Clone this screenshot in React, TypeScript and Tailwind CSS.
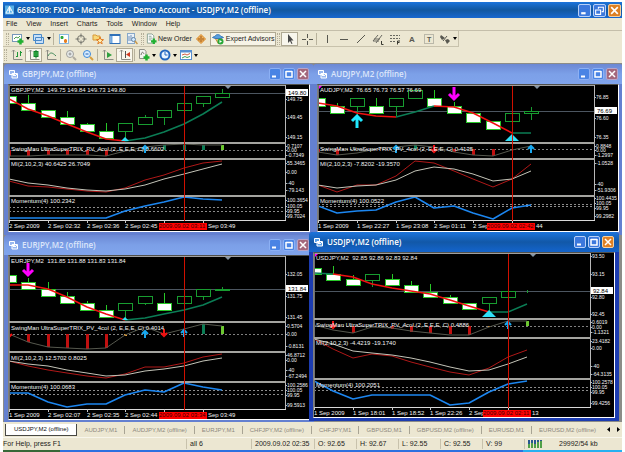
import React from 'react';

type Candle = {
  top: number;
  bottom: number;
  high?: number;
  low?: number;
  hollow?: boolean;
};
type Mark = {
  at: number;
  y: number;
  kind: 'up' | 'down';
  color: string;
  big?: boolean;
};
type Bar = {
  at: number;
  y: number;
  color: string;
};
type AxisLabel = [number, string];
interface ChartData {
  symbol: string;
  quote: string;
  swing: string;
  mi: string;
  momentum: string;
  height: number;
  splits: [number, number, number, number];
  textRows: [number, number, number, number, number];
  priceY: number;
  price: string;
  candles: Candle[];
  average: number[];
  // ranges of the moving average, drawn red for falling and green for rising
  trend: [number, number, string][];
  triangle: { at: number; y: number; size: number };
  corner?: boolean;
  marks: Mark[];
  bars: Bar[];
  zero: number;
  swingLine: number[];
  miRed: number[];
  miWhite: number[];
  momentumLine: number[];
  levels: [number, number];
  cursor: number;
  cursorTime: string;
  dates: string[];
  tail: string;
  axis: AxisLabel[];
}

const RED = '#f01010';
const GREEN = '#0b7d55';
const BLUE = '#1c86f0';
const MAGENTA = '#ff00ff';
const STEP = 19.4;
const PLOT = 276;
const px = (i: number) => Math.round(i * STEP);
const points = (ys: number[], from = 0) => ys.map((y, i) => `${px(i + from)},${y}`).join(' ');

const f = (top: number, bottom: number, high = top, low = bottom): Candle => ({ top, bottom, high, low });
const h = (top: number, bottom: number, high = top, low = bottom): Candle => ({ top, bottom, high, low, hollow: true });

const gbpjpy: ChartData = {
  symbol: 'GBPJPY,M2',
  quote: '149.75 149.84 149.73 149.80',
  swing: 'SwingMan UltraSuperTRIX_PV_4col (2, E,E,E, C) 0.6602',
  mi: 'MI(2,10,2,3) 40.6425 26.7049',
  momentum: 'Momentum(4) 100.2342',
  height: 146,
  splits: [57, 73, 110, 135],
  textRows: [5, 64, 79, 116, 141],
  priceY: 8,
  price: '149.80',
  candles: [f(11, 18), f(18, 25, 10), f(25, 32), f(32, 39, 26), f(39, 46, 38), f(46, 53, 38), h(38, 46, 38, 54), h(32, 39, 30), h(25, 32, 25, 40), h(18, 25), h(11, 18, 11, 22), h(8, 12, 4, 13)],
  average: [14, 24, 31, 39, 47, 54, 56, 53, 47, 39, 29, 17],
  trend: [[0, 6, RED], [6, 11, GREEN]],
  triangle: { at: 6, y: 52, size: 4 },
  marks: [{ at: 7, y: 61, kind: 'up', color: '#18a8f0' }],
  bars: [{ at: 0, y: 71, color: '#c01010' }, { at: 1, y: 71, color: '#c01010' }, { at: 2, y: 70, color: '#c01010' }, { at: 3, y: 70, color: '#c01010' }, { at: 4, y: 70, color: '#c01010' }, { at: 5, y: 71, color: '#c01010' }, { at: 8, y: 60, color: '#0b7d55' }, { at: 9, y: 60, color: '#0b7d55' }, { at: 10, y: 60, color: '#0b7d55' }, { at: 11, y: 60, color: '#6cc830' }],
  zero: 65,
  swingLine: [71, 71, 70, 70, 70, 71, 66, 62, 60, 59, 60, 60],
  miRed: [96, 101, 102, 104, 106, 107, 103, 95, 90, 83, 78, 76],
  miWhite: [94, 98, 100, 103, 105, 106, 104, 100, 94, 89, 84, 79],
  momentumLine: [133, 133, 133, 133, 133, 133, 126, 121, 117, 112, 114, 115],
  levels: [122, 126],
  cursor: 9,
  cursorTime: '2009.09.02 03:11',
  dates: ['2 Sep 2009', '2 Sep 02:32', '2 Sep 02:36', '2 Sep 02:45'],
  tail: 'Sep 03:49',
  axis: [[14, '149.75'], [32, '149.45'], [52, '149.15'], [61, '0.7107'], [65, '0.00'], [70, '-0.7349'], [78, '55.3465'], [87, '0.00'], [98, '-40'], [105, '-79.143'], [115, '100.3654'], [121, '100.05'], [126, '99.95'], [131, '99.7024']]
};

const audjpy: ChartData = {
  symbol: 'AUDJPY,M2',
  quote: '76.65 76.73 76.57 76.69',
  swing: 'SwingMan UltraSuperTRIX_PV_4col (2, E,E,E, C) 0.4135',
  mi: 'MI(2,10,2,3) -7.8202 -19.3570',
  momentum: 'Momentum(4) 100.0522',
  height: 146,
  splits: [57, 73, 110, 135],
  textRows: [5, 64, 79, 116, 141],
  priceY: 26,
  price: '76.69',
  candles: [f(13, 21, 2), f(21, 28, 18), h(13, 21, 13, 30), f(21, 28, 13), h(13, 21, 13, 31), h(5, 13), f(13, 21, 5), f(21, 28, 17), f(28, 37), f(36, 44), h(28, 36), h(26, 28, 22, 35)],
  average: [18, 21, 28, 31, 32, 27, 21, 22, 28, 38, 48, 48],
  trend: [[0, 4, RED], [4, 6, GREEN], [6, 10, RED], [10, 11, GREEN]],
  triangle: { at: 10, y: 49, size: 7 },
  corner: true,
  marks: [{ at: 2, y: 31, kind: 'up', color: '#20e8ff', big: true }, { at: 7, y: 2, kind: 'down', color: MAGENTA, big: true }, { at: 4, y: 61, kind: 'up', color: '#18a8f0' }, { at: 6, y: 60, kind: 'down', color: RED }, { at: 11, y: 61, kind: 'up', color: '#18a8f0' }],
  bars: [{ at: 0, y: 67, color: '#c01010' }, { at: 1, y: 70, color: '#c01010' }, { at: 5, y: 60, color: '#0b7d55' }, { at: 7, y: 67, color: '#c01010' }, { at: 8, y: 70, color: '#c01010' }, { at: 9, y: 71, color: '#c01010' }],
  zero: 64,
  swingLine: [67, 70, 68, 64, 62, 60, 62, 67, 70, 71, 65, 61],
  miRed: [100, 107, 100, 100, 91, 76, 78, 86, 94, 102, 94, 79],
  miWhite: [100, 103, 101, 100, 95, 86, 82, 84, 89, 96, 94, 86],
  momentumLine: [121, 128, 126, 125, 117, 112, 123, 121, 128, 134, 123, 120],
  levels: [119, 121],
  cursor: 10,
  cursorTime: '2009.09.02 02:42',
  dates: ['1 Sep 2009', '1 Sep 22:27', '1 Sep 23:08', '2 Sep 01:11', '2 Sep'],
  tail: '44',
  axis: [[12, '76.85'], [33, '76.60'], [52, '76.35'], [61, '0.8848'], [65, '0.00'], [70, '-1.2997'], [78, '-1.0528'], [99, '-40'], [105, '-51.9306'], [113, '100.4435'], [118, '100.05'], [123, '99.95'], [131, '99.2982']]
};

const eurjpy: ChartData = {
  symbol: 'EURJPY,M2',
  quote: '131.85 131.88 131.83 131.84',
  swing: 'SwingMan UltraSuperTRIX_PV_4col (2, E,E,E, C) 0.4014',
  mi: 'MI(2,10,2,3) 12.5702 0.8025',
  momentum: 'Momentum(4) 100.0683',
  height: 163,
  splits: [65, 95, 125, 153],
  textRows: [5, 72, 102, 131, 159],
  priceY: 33,
  price: '131.84',
  candles: [f(19, 26, 6), f(26, 33, 22), f(33, 40, 26), f(40, 47, 36), f(47, 54, 45), f(54, 61, 49), h(47, 54, 47, 63), h(40, 47, 40, 49), f(47, 54, 37), h(40, 47), h(33, 40, 33, 44), h(33, 34, 31, 35)],
  average: [29, 29, 33, 41, 51, 58, 64, 62, 58, 54, 49, 41],
  trend: [[0, 6, RED], [6, 11, GREEN]],
  triangle: { at: 6, y: 61, size: 3 },
  marks: [{ at: 1, y: 7, kind: 'down', color: MAGENTA, big: true }, { at: 0, y: 74, kind: 'down', color: RED }, { at: 7, y: 75, kind: 'up', color: '#18a8f0' }, { at: 8, y: 73, kind: 'down', color: RED }, { at: 9, y: 74, kind: 'up', color: '#18a8f0' }],
  bars: [{ at: 1, y: 86, color: '#c01010' }, { at: 2, y: 91, color: '#c01010' }, { at: 3, y: 92, color: '#c01010' }, { at: 4, y: 93, color: '#c01010' }, { at: 5, y: 92, color: '#c01010' }, { at: 6, y: 80, color: '#f0a030' }, { at: 10, y: 68, color: '#0b7d55' }, { at: 11, y: 70, color: '#6cc830' }],
  zero: 78,
  swingLine: [78, 86, 91, 92, 93, 92, 79, 71, 78, 73, 68, 70],
  miRed: [105, 110, 114, 117, 120, 122, 118, 111, 111, 107, 101, 98],
  miWhite: [105, 108, 110, 114, 117, 120, 119, 115, 113, 110, 105, 102],
  momentumLine: [137, 137, 146, 151, 148, 148, 139, 134, 136, 127, 131, 134],
  levels: [134, 138],
  cursor: 9,
  cursorTime: '2009.09.02 03:34',
  dates: ['1 Sep 2009', '2 Sep 02:07', '2 Sep 02:35', '2 Sep 02:44'],
  tail: 'Sep 03:49',
  axis: [[18, '132.05'], [40, '131.75'], [61, '131.45'], [70, '0.5704'], [78, '0.00'], [90, '-0.8131'], [99, '46.8712'], [104, '0.00'], [114, '-40'], [120, '-67.2494'], [129, '100.2586'], [134, '100.05'], [139, '99.95'], [149, '99.5913']]
};

const usdjpy: ChartData = {
  symbol: 'USDJPY,M2',
  quote: '92.85 92.86 92.83 92.84',
  swing: 'SwingMan UltraSuperTRIX_PV_4col (2, E,E,E, C) 0.4886',
  mi: 'MI(2,10,2,3) -4.4219 -19.1740',
  momentum: 'Momentum(4) 100.2051',
  height: 164,
  splits: [65, 84, 125, 154],
  textRows: [5, 72, 90, 132, 160],
  priceY: 38,
  price: '92.84',
  candles: [f(15, 21, 4), f(21, 27, 13), f(26, 32, 22), h(21, 27, 21, 34), f(26, 32, 21), f(32, 39, 28), f(39, 44, 31), f(44, 50, 42), f(50, 56), h(44, 50, 44, 59), h(38, 44), h(38, 38, 37, 40)],
  average: [20, 21, 24, 31, 35, 38, 41, 47, 53, 59, 59, 51],
  trend: [[0, 1, GREEN], [1, 9, RED], [9, 11, GREEN]],
  triangle: { at: 9, y: 57, size: 7 },
  corner: true,
  marks: [{ at: 1, y: 68, kind: 'down', color: RED }, { at: 10, y: 69, kind: 'up', color: '#18a8f0' }],
  bars: [{ at: 2, y: 80, color: '#c01010' }, { at: 4, y: 76, color: '#c01010' }, { at: 5, y: 79, color: '#c01010' }, { at: 6, y: 80, color: '#c01010' }, { at: 7, y: 81, color: '#c01010' }, { at: 8, y: 82, color: '#c01010' }, { at: 9, y: 74, color: '#f0a030' }, { at: 11, y: 68, color: '#6cc830' }],
  zero: 73,
  swingLine: [72, 77, 80, 74, 75, 78, 80, 82, 82, 74, 68, 68],
  miRed: [86, 96, 105, 101, 103, 109, 114, 119, 122, 115, 104, 97],
  miWhite: [86, 91, 98, 100, 102, 105, 109, 114, 118, 117, 111, 104],
  momentumLine: [128, 138, 146, 142, 142, 142, 142, 152, 150, 139, 131, 128],
  levels: [134, 137],
  cursor: 10,
  cursorTime: '2009.09.02 02:11',
  dates: ['1 Sep 2009', '1 Sep 18:01', '1 Sep 18:52', '1 Sep 22:26', '2 Sep'],
  tail: '13',
  axis: [[3, '93.50'], [21, '93.15'], [44, '92.80'], [61, '92.45'], [69, '0.6019'], [74, '0.00'], [79, '-1.1321'], [88, '23.4182'], [95, '0.00'], [113, '-40'], [121, '-64.3135'], [129, '100.2578'], [134, '100.05'], [139, '99.95'], [150, '99.4256']]
};

function Arrow({ mark }: { mark: Mark }) {
  const x = px(mark.at);
  const [w, len, stroke] = mark.big ? [5, 12, 3] : [3, 7, 2];
  const tip = mark.kind === 'up' ? mark.y : mark.y + len;
  const end = mark.kind === 'up' ? mark.y + len : mark.y;
  const wing = mark.kind === 'up' ? tip + w : tip - w;
  return <path d={`M${x} ${end}V${tip}M${x - w} ${wing}L${x} ${tip}L${x + w} ${wing}`} fill="none" stroke={mark.color} strokeWidth={stroke} />;
}

function Chart({ data }: { data: ChartData }) {
  const [head, swingRow, miRow, momentumRow, dateRow] = data.textRows;
  const [s1, s2, s3, foot] = data.splits;
  const cursorX = px(data.cursor);
  return <svg viewBox={`0 0 300 ${data.height}`} className="block w-full bg-black font-['Liberation_Sans',sans-serif] text-[6px]">
      <g shapeRendering="crispEdges">
        <path d={`M0 ${data.priceY + 0.5}H${PLOT}`} stroke="#4c5660" />
        <path d={`M0 ${data.zero + 0.5}H${PLOT}`} stroke="#808080" strokeDasharray="2 2" />
        {data.levels.map(y => <path key={y} d={`M0 ${y + 0.5}H${PLOT}`} stroke="#8c8c8c" strokeDasharray="2 2" />)}
        {data.candles.map((c, i) => <g key={i} stroke={c.hollow ? '#189c30' : '#28c828'} fill={c.hollow ? '#000' : '#fff'}>
            <path d={`M${px(i) + 0.5} ${c.high}V${c.low}`} />
            <rect x={px(i) - 7 + 0.5} y={c.top + 0.5} width={14} height={c.bottom - c.top} />
          </g>)}
        {data.bars.map(b => <rect key={b.at} x={px(b.at) - 1} width={3} y={Math.min(b.y, data.zero)} height={Math.abs(b.y - data.zero)} fill={b.color} />)}
      </g>
      <g fill="none" strokeLinejoin="round">
        <polyline points={points(data.swingLine)} stroke="#56584e" />
        <polyline points={points(data.miRed)} stroke="#b01818" />
        <polyline points={points(data.miWhite)} stroke="#c4c4b8" />
        <polyline points={points(data.momentumLine)} stroke={BLUE} strokeWidth={1.5} />
        {data.trend.map(([from, to, color]) => <polyline key={from} points={points(data.average.slice(from, to + 1), from)} stroke={color} strokeWidth={1.5} />)}
      </g>
      <path d={`M${px(data.triangle.at)} ${data.triangle.y}l${data.triangle.size} ${data.triangle.size}h${-2 * data.triangle.size}z`} fill="#30e0f8" />
      {data.marks.map(m => <Arrow key={`${m.at}-${m.y}`} mark={m} />)}
      {data.corner && <path d="M0 0h5l-5 5z" fill={MAGENTA} />}
      <path d="M216 1h6l-3 3z" fill="#8494a4" />
      <g shapeRendering="crispEdges">
        <rect x="0" y="0" width={PLOT} height="1" fill="#a0a0a0" />
        <rect x={PLOT} y="0" width="1" height={foot + 1} fill="#b8b8b8" />
        <rect x="0" y="0" width="1" height={foot} fill="#707070" />
        {[s1, s2, s3].map(y => <rect key={y} x="0" y={y} width={PLOT + 1} height="2" fill="#a4a4a0" />)}
        <rect x="0" y={foot} width={PLOT + 1} height="1" fill="#d8d8d8" />
        {[0, 2, 4, 6, 8, 10].map(i => <rect key={i} x={px(i)} y={foot} width="1" height="3" fill="#c8c8c8" />)}
        <rect x={cursorX} y="1" width="1" height={foot} fill="#d01000" />
        {data.axis.map(([y]) => <rect key={y} x={PLOT} y={y} width="2" height="1" fill="#b8b8b8" />)}
      </g>
      <g fill="#f4f4f4">
        <text x="2" y={head + 2} xmlSpace="preserve">{`${data.symbol}  ${data.quote}`}</text>
        <text x="2" y={swingRow + 2}>{data.swing}</text>
        <text x="2" y={miRow + 2}>{data.mi}</text>
        <text x="2" y={momentumRow + 2}>{data.momentum}</text>
        {data.axis.map(([y, label]) => <text key={label + y} x="278" y={y + 2} className="text-[5px]">{label}</text>)}
        {data.dates.map((d, i) => <text key={d} x={px(i * 2)} y={dateRow + 2}>{d}</text>)}
        <text x={cursorX + 24} y={dateRow + 2}>{data.tail}</text>
      </g>
      <rect x={cursorX - 25} y={dateRow - 3} width="48" height="7" fill="#ff0000" />
      <text x={cursorX - 25} y={dateRow + 2} fill="#400000">{data.cursorTime}</text>
      <rect x={PLOT + 1} y={data.priceY - 4} width="22" height="7" fill="#fff" />
      <text x="279" y={data.priceY + 2} fill="#000">{data.price}</text>
    </svg>;
}

function WindowButtons({ active, main }: { active?: boolean; main?: boolean }) {
  const size = main ? 'w-[13px] h-[13px]' : 'w-[12px] h-[12px]';
  const blue = active ? 'bg-[#3c78dc] border-[#b8d0f8]' : 'bg-[#4a84e4] border-[#8cb0f4]';
  const close = active ? 'bg-[#dd8024] border-[#f4d0a0]' : 'bg-[#a4687c] border-[#b8a4c8]';
  return <div className="flex gap-[2px]">
      <button aria-label="Minimize" className={`${size} ${blue} border rounded-[2px]`}>
        <svg viewBox="0 0 10 10" className="w-full h-full"><path d="M2 7.500h4" stroke="#fff" strokeWidth="2" /></svg>
      </button>
      <button aria-label={main ? 'Restore' : 'Maximize'} className={`${size} ${blue} border rounded-[2px]`}>
        <svg viewBox="0 0 10 10" className="w-full h-full">
          {main ? <path d="M4 3.500V2h4.500v4H7M1.500 4.500h4.500v4h-4.500z" fill="none" stroke="#fff" /> : <path d="M2 2.500h6M2 2v6h6v-6" fill="none" stroke="#fff" strokeWidth="1.500" />}
        </svg>
      </button>
      <button aria-label="Close" className={`${size} ${close} border rounded-[2px]`}>
        <svg viewBox="0 0 10 10" className="w-full h-full"><path d="M2 2l6 6M8 2l-6 6" stroke="#fff" strokeWidth="1.500" /></svg>
      </button>
    </div>;
}

function ChartWindow({ data, active, place }: { data: ChartData; active?: boolean; place: string }) {
  return <section className={`absolute w-[310px] px-[4px] pb-[3px] rounded-t-[4px] ${active ? 'bg-[#1c3cb0] z-10' : 'bg-[#6480d0]'} ${place}`}>
      <header className={`-mx-[4px] px-[5px] h-[20px] flex items-center justify-between rounded-t-[4px] ${active ? 'bg-linear-to-b from-[#1c74dc] via-[#1258a8] to-[#1464cc]' : 'bg-linear-to-b from-[#6c88d4] via-[#7ca0e8] to-[#80a4ec]'}`}>
        <div className="flex items-center gap-[4px]">
          <svg viewBox="0 0 9 9" className="w-[9px] h-[9px]">
            <path d="M0.500 0.500h5v4h-5zM3 3.500h5.500v4.500h-5.500z" fill={active ? '#5aa0e8' : '#98b8f0'} stroke="#fff" />
            <path d="M4 6l1-1 1 1 2-2" fill="none" stroke="#fff" />
          </svg>
          <h2 className={`font-['Open_Sans',sans-serif] font-semibold text-[8px] leading-[12px] ${active ? 'text-white' : 'text-[#dce6fa]'}`}>{data.symbol} (offline)</h2>
        </div>
        <WindowButtons active={active} />
      </header>
      <div className="border border-t-[#50504c] border-l-[#80807c] border-r-white border-b-white">
        <Chart data={data} />
      </div>
    </section>;
}

function Grip() {
  return <div className="w-[3px] h-[12px] mx-px border-x border-dotted border-[#b4ae98]" />;
}
function Separator() {
  return <div className="w-px h-[12px] mx-px bg-[#b8b29c]" />;
}
interface ToolProps {
  label: string;
  children: React.ReactNode;
  pressed?: boolean;
  menu?: boolean;
}
function Tool({ label, children, pressed, menu }: ToolProps) {
  return <button aria-label={label} aria-pressed={pressed} className={`h-[14px] flex items-center justify-center gap-[2px] ${menu ? 'w-[21px]' : 'w-[17px]'} ${pressed ? 'bg-[#f8f6ec] border border-[#b0aa94]' : ''}`}>
      <svg viewBox="0 0 12 12" className="w-[12px] h-[12px] shrink-0" fill="none">{children}</svg>
      {menu && <svg viewBox="0 0 4 3" className="w-[4px] h-[3px] shrink-0"><path d="M0 0h4l-2 3z" fill="#000" /></svg>}
    </button>;
}

const plus = <path d="M8.500 5.500v6M5.500 8.500h6" stroke="#20b030" strokeWidth="2.500" />;
const axes = <path d="M2.500 1v9.500h9M1 2.500l1.500-1.500 1.500 1.500" stroke="#8c8c84" />;

function MainToolbar() {
  return <div className="h-[16px] flex">
      <div className="flex items-center pl-[2px] border-r border-b border-[#c8c2ac]">
        <Grip />
        <Tool label="New chart" menu>
          <rect x="0.500" y="1.500" width="9" height="7" fill="#fff" stroke="#7898b8" /><path d="M2 6l2-2 2 1 2-2" stroke="#50a050" />{plus}
        </Tool>
        <Tool label="Profiles" menu>
          <path d="M0.500 1.500h8v6h-8zM2.500 4.500h8v6h-8z" fill="#c8e0f8" stroke="#4888c8" />
        </Tool>
        <Separator />
        <Tool label="Market Watch">
          <rect x="1.500" y="1.500" width="9" height="9" fill="#fff" stroke="#88b8e0" /><path d="M4 3v3M2.500 4.500h3" stroke="#30a840" strokeWidth="2" /><path d="M7.500 6v4M6 8h3" stroke="#e88020" strokeWidth="2" />
        </Tool>
        <Tool label="Data window">
          <circle cx="6" cy="6" r="3.500" stroke="#74746c" /><path d="M6 0.500v4M6 7.500v4M0.500 6h4M7.500 6h4" stroke="#74746c" />
        </Tool>
        <Tool label="Navigator">
          <path d="M1 2h3l1 1h3v4h-7z" fill="#f8d878" stroke="#d89838" /><path d="M8 4l1 2.500 2.500.2-2 1.600.700 2.500-2.200-1.400-2.200 1.400.700-2.500-2-1.600 2.500-.2z" fill="#fff0b0" stroke="#e07820" />
        </Tool>
        <Tool label="Terminal">
          <rect x="1" y="1.500" width="10" height="9" fill="#fff" stroke="#3070b8" /><path d="M2.500 2v8" stroke="#70a8e0" strokeWidth="2" /><path d="M1 2.500h10" stroke="#3070b8" />
        </Tool>
        <Tool label="Strategy Tester">
          <rect x="1.500" y="0.500" width="7" height="10" fill="#e8f0f8" stroke="#88a8c8" /><path d="M3 3v5M5 2v6M7 4v3" stroke="#7090b8" /><circle cx="7.500" cy="6.500" r="2" fill="#d0e8ff" stroke="#6888a8" /><path d="M9 8l2.500 3" stroke="#c89848" strokeWidth="1.500" />
        </Tool>
        <Grip />
        <button className="h-[14px] flex items-center gap-px px-px whitespace-nowrap">
          <svg viewBox="0 0 12 12" className="w-[11px] h-[12px]" fill="none">
            <path d="M1.500 0.500h5l2 2v8h-7z" fill="#fff" stroke="#88a090" /><path d="M3 3h3M3 5h4M3 7h3" stroke="#88a090" />{plus}
          </svg>
          New Order
        </button>
        <Tool label="MetaEditor">
          <path d="M6 1.500l4.500 4.500-4.500 4.500-4.500-4.500z" fill="#f4b860" stroke="#d88828" /><path d="M6 3v6M4 5v2.500M8 5v2.500" stroke="#985010" />
        </Tool>
        <button aria-pressed className="h-[14px] flex items-center gap-[2px] px-px bg-[#f6f3e6] border border-[#b0aa94] whitespace-nowrap">
          <svg viewBox="0 0 12 12" className="w-[12px] h-[12px]" fill="none">
            <path d="M3 5l3.500 6 3-6z" fill="#f0c080" stroke="#c89040" /><path d="M0.500 4.500c1-1 2-1 2.500-1 .5-2.500 5-2.500 6 0 1 0 2 .5 2.500 1-3 1.500-8 1.500-11 0z" fill="#58a0e0" stroke="#3878b8" /><circle cx="8.500" cy="8.500" r="3" fill="#28a838" /><path d="M7.500 7l2.500 1.500-2.500 1.500z" fill="#fff" />
          </svg>
          Expert Advisors
        </button>
        <Grip />
        <Tool label="Cursor" pressed>
          <path d="M4 1v9l2-2 1.500 3 1-.5-1.500-3h2.500z" fill="#484848" />
        </Tool>
        <Tool label="Crosshair">
          <path d="M6.500 1v4M6.500 8v4M1 6.500h4M8 6.500h4" stroke="#585850" />
        </Tool>
        <Separator />
        <Tool label="Vertical line"><path d="M6.500 2v8" stroke="#585850" /></Tool>
        <Tool label="Horizontal line"><path d="M2 6.500h8" stroke="#585850" /></Tool>
        <Tool label="Trendline"><path d="M2 10l8-8" stroke="#585850" /></Tool>
        <Tool label="Equidistant channel">
          <path d="M1 8l5-6M4 10l6-8M2 6h6M1 8h6" stroke="#686860" /><path d="M9.500 8v3.500h2" stroke="#383830" />
        </Tool>
        <Tool label="Fibonacci retracement">
          <path d="M1 2.500h10M1 5.500h10M1 8.500h6" stroke="#686860" strokeDasharray="2 1" /><path d="M8.500 11.500v-3.500h2.500M8.500 9.500h2" stroke="#383830" />
        </Tool>
        <Tool label="Text"><text x="3" y="9" fontSize="8" fontWeight="bold" fill="#585850">A</text></Tool>
        <Tool label="Text label">
          <rect x="1.500" y="1.500" width="9" height="9" stroke="#888880" strokeDasharray="1 1" /><text x="4" y="9" fontSize="7" fontWeight="bold" fill="#585850">T</text>
        </Tool>
        <Tool label="Arrows" menu>
          <path d="M2 2l4 3-3 2-2-3zM6 7l3-1 2 2-3 3z" fill="#585850" /><path d="M4 8l4-5" stroke="#585850" />
        </Tool>
      </div>
    </div>;
}

function ChartToolbar() {
  return <div className="h-[16px] flex items-center">
      <Grip />
      <Tool label="Bar chart">{axes}<path d="M6.500 3v5M5 7.500h1.500M9.500 2v5M9.500 3.500h1.500" stroke="#209838" /></Tool>
      <Tool label="Candlesticks" pressed>{axes}<rect x="6" y="2.500" width="4" height="5" fill="#40c050" stroke="#108028" /><path d="M8 1v8.500" stroke="#108028" /></Tool>
      <Tool label="Line chart">{axes}<path d="M3 7c2-4 4-4 8 0" stroke="#408858" /></Tool>
      <Separator />
      <Tool label="Zoom in"><circle cx="5" cy="5" r="3.500" fill="#e8ecec" stroke="#a0a09c" /><path d="M3.500 5h3M5 3.500v3" stroke="#909090" /><path d="M8 8l3 3" stroke="#b0aca0" strokeWidth="2" /></Tool>
      <Tool label="Zoom out"><circle cx="5" cy="5" r="3.500" fill="#d8ecff" stroke="#3c88d8" /><path d="M3.500 5h3" stroke="#2060b0" /><path d="M8 8l3 3" stroke="#d8a040" strokeWidth="2" /></Tool>
      <Separator />
      <Tool label="Auto scroll">{axes}<path d="M5 3l5 3-5 3z" fill="#30a040" /></Tool>
      <Tool label="Chart shift" pressed>{axes}<path d="M6.500 2v7" stroke="#505050" /><path d="M11 3v5l-4-2.500z" fill="#d03820" /></Tool>
      <Separator />
      <Tool label="Indicators" menu><path d="M1.500 0.500h5l1.500 2v7h-6.500z" fill="#f4f4f0" stroke="#909088" /><path d="M3 6c1-4 2-3 3-1" stroke="#707068" />{plus}</Tool>
      <Tool label="Periods" menu><circle cx="6" cy="6" r="4.500" fill="#e8f4ff" stroke="#2468c0" strokeWidth="2" /><path d="M6 3v3h2.500" stroke="#2468c0" /></Tool>
      <Tool label="Templates" menu><rect x="0.500" y="1.500" width="11" height="9" fill="#fff" stroke="#5890d0" /><path d="M0.500 2.500h11" stroke="#5890d0" strokeWidth="2" /><path d="M2 6l3-1 2 1 3-1.500" stroke="#d06040" /><path d="M2 9l3-1.500 2 1 3-1" stroke="#40a050" /></Tool>
    </div>;
}

const menus = ['File', 'View', 'Insert', 'Charts', 'Tools', 'Window', 'Help'];
const tabs = ['AUDJPY,M1', 'AUDJPY,M2 (offline)', 'EURJPY,M1', 'CHFJPY,M2 (offline)', 'CHFJPY,M1', 'GBPUSD,M1', 'GBPUSD,M2 (offline)', 'EURUSD,M1', 'EURUSD,M2 (offline)'];
const prices = ['O: 92.65', 'H: 92.67', 'L: 92.55', 'C: 92.55', 'V: 99'];

export default function App() {
  return <div className="h-screen flex flex-col overflow-hidden bg-white pl-[3px] pr-[3px] pt-[2px] font-['Liberation_Sans',sans-serif] text-[7px] leading-[10px] text-[#1c1c1a]">
      <header className="h-[16px] shrink-0 flex items-center justify-between pl-[2px] pr-px bg-linear-to-b from-[#1c74dc] via-[#1258a0] to-[#1868d0]">
        <div className="flex items-center gap-[3px]">
          <svg viewBox="0 0 10 10" className="w-[9px] h-[10px]">
            <rect width="10" height="10" fill="#58b0e8" /><path d="M5 1l4 7.500h-8zM3 5h4M5 1v7" fill="none" stroke="#fff" />
          </svg>
          <h1 className="font-['Open_Sans',sans-serif] font-semibold text-[8px] leading-[12px] text-white">6682109: FXDD - MetaTrader - Demo Account - USDJPY,M2 (offline)</h1>
        </div>
        <WindowButtons active main />
      </header>
      <div className="shrink-0 bg-[#ece7d2]">
        <nav className="h-[13px] flex items-center gap-[9px] pl-[3px] border-b border-[#c4beaa]">
          {menus.map(menu => <button key={menu}>{menu}</button>)}
        </nav>
        <MainToolbar />
        <ChartToolbar />
      </div>
      <main className="relative flex-1 min-h-0 overflow-hidden bg-[#8c8c88]">
        <ChartWindow data={gbpjpy} place="left-[1px] top-[1px]" />
        <ChartWindow data={audjpy} place="left-[310px] top-[1px]" />
        <ChartWindow data={eurjpy} place="left-[1px] top-[172px]" />
        <ChartWindow data={usdjpy} active place="left-[306px] top-[169px]" />
      </main>
      <div className="h-[15px] shrink-0 flex items-center bg-[#ece7d2] pl-[2px] text-[6px] text-[#8c887e] whitespace-nowrap">
        <button className="h-[12px] px-[8px] bg-white border border-t-0 border-[#484844] text-[#101010]">USDJPY,M2 (offline)</button>
        <div className="flex-1 min-w-0 flex divide-x divide-[#a8a494]">
          {tabs.map(tab => <button key={tab} className="px-[7px] leading-[8px]">{tab}</button>)}
        </div>
        <div className="flex gap-[7px] pr-[2px]">
          <button aria-label="Scroll tabs left"><svg viewBox="0 0 3 5" className="w-[3px] h-[5px]"><path d="M3 0v5l-3-2.500z" fill="#000" /></svg></button>
          <button aria-label="Scroll tabs right"><svg viewBox="0 0 3 5" className="w-[3px] h-[5px]"><path d="M0 0v5l3-2.500z" fill="#000" /></svg></button>
        </div>
      </div>
      <footer className="h-[13px] shrink-0 flex items-center bg-[#ece7d2] border-t border-[#f8f6ec] whitespace-nowrap">
        <span className="flex-1">For Help, press F1</span>
        <span className="w-[65px] pl-[3px] border-l border-[#c8c2ac]">all 6</span>
        <span className="w-[63px] pl-[3px] border-l border-[#c8c2ac]">2009.09.02 02:35</span>
        {prices.map(price => <span key={price} className="w-[42px] pl-[3px] border-l border-[#c8c2ac]">{price}</span>)}
        <span className="w-[98px] flex items-center gap-[17px] pl-[3px] border-l border-[#c8c2ac]">
          <svg viewBox="0 0 14 8" className="w-[14px] h-[8px]">
            <path d="M1 0v8M4 0v8M7 0v8M10 0v8M13 0v8" stroke="#285890" strokeWidth="2" />
            <path d="M1 4v4M4 3v5M7 4v4M10 2v6M13 1v7" stroke="#50a048" strokeWidth="2" />
          </svg>
          29992/54 kb
        </span>
      </footer>
      <div className="h-[2px] shrink-0 flex">
        <div className="w-[57px] bg-[#386838]" />
        <div className="flex-1 bg-[#2c70e0]" />
        <div className="w-[99px] bg-[#28b0f0]" />
      </div>
    </div>;
}
